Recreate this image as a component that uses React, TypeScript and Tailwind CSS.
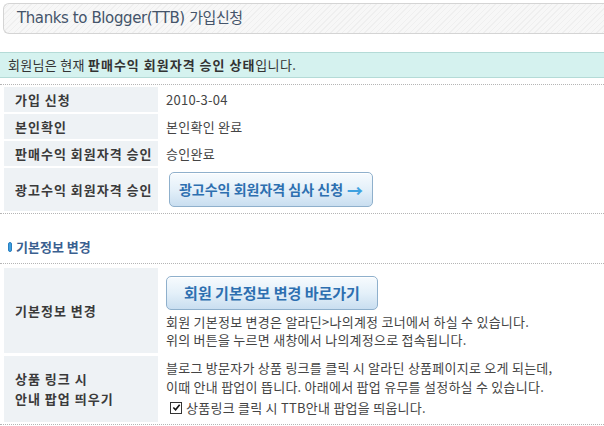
const font = "font-['Noto_Sans_CJK_KR',sans-serif]";

function Dotted() {
  return <div className="h-px w-full border-b border-dotted border-[#b5b5b5]" />;
}

function Label({ children, className = "" }: { children: React.ReactNode; className?: string }) {
  return (
    <div
      className={`bg-[#eef2f5] pl-[11px] flex items-center text-[13px] font-bold tracking-[1px] text-[#3a3a3a] ${className}`}
    >
      {children}
    </div>
  );
}

function BlueButton({ children, className = "" }: { children: React.ReactNode; className?: string }) {
  return (
    <button
      className={`rounded-[5px] border border-[#8fb0cc] bg-gradient-to-b from-[#f7fbfe] via-[#e4f0f9] to-[#c9def0] text-[#2d6fb0] font-bold shadow-[inset_0_1px_0_#fff] ${className}`}
    >
      {children}
    </button>
  );
}

export default function App() {
  return (
    <div className={`w-[604px] h-[426px] bg-white overflow-hidden ${font}`}>
      {/* Title */}
      <div className="pt-[3px] pl-[3px]">
        <div className="h-[31px] rounded-l-[6px] border border-r-0 border-[#d4d4d4] bg-[repeating-linear-gradient(135deg,#f7f7f7_0px,#f7f7f7_3px,#efefef_3px,#efefef_4px)] flex items-center pl-[13px]">
          <span className="text-[15px] text-[#44546a] font-['DejaVu_Sans','Noto_Sans_CJK_KR',sans-serif] tracking-[-0.4px]">
            Thanks to Blogger(TTB) 가입신청
          </span>
        </div>
      </div>

      {/* Notice */}
      <div className="mt-[18px] h-[26px] border-y border-[#b4dbd7] bg-[#d5f2ef] flex items-center pl-[8px] text-[13px] tracking-[0.3px] text-[#333]">
        회원님은 현재&nbsp;<b className="tracking-[1px]">판매수익 회원자격 승인 상태</b>입니다.
      </div>

      <div className="mt-[6px]">
        <Dotted />
      </div>

      {/* Status table */}
      <div className="grid grid-cols-[154px_1fr] gap-y-[2px] mt-[2px] pl-[4px] text-[13px] tracking-[0.25px] text-[#444]">
        <Label className="h-[25px]">가입 신청</Label>
        <div className="flex items-center pl-[8px]">2010-3-04</div>
        <Label className="h-[25px]">본인확인</Label>
        <div className="flex items-center pl-[8px]">본인확인 완료</div>
        <Label className="h-[25px]">판매수익 회원자격 승인</Label>
        <div className="flex items-center pl-[8px]">승인완료</div>
        <Label className="h-[43px]">광고수익 회원자격 승인</Label>
        <div className="flex items-center pl-[11px]">
          <BlueButton className="w-[204px] h-[35px] flex items-center justify-center gap-[4px] tracking-normal text-[14px]">
            광고수익 회원자격 심사 신청
            <span className="text-[#3ea1e0] text-[16px] font-black">→</span>
          </BlueButton>
        </div>
      </div>

      <div className="mt-[2px]">
        <Dotted />
      </div>

      {/* Section header */}
      <div className="mt-[22px] h-[22px] flex items-center pl-[8px] gap-[4px]">
        <span className="w-[4px] h-[10px] rounded-full bg-[#3d9fe0] border border-[#2a7fc0]" />
        <span className="text-[13px] font-bold text-[#3a6090]">기본정보 변경</span>
      </div>

      <div className="mt-[5px]">
        <Dotted />
      </div>

      {/* Basic info table */}
      <div className="grid grid-cols-[154px_1fr] gap-y-[3px] mt-[4px] pl-[4px] text-[13px] tracking-[0.25px] text-[#444]">
        <Label className="h-[85px]">기본정보 변경</Label>
        <div className="pl-[8px] pt-[8px]">
          <BlueButton className="w-[212px] h-[34px] flex items-center justify-center tracking-normal text-[15px]">
            회원 기본정보 변경 바로가기
          </BlueButton>
          <div className="mt-[3px] leading-[18px]">
            <div>회원 기본정보 변경은 알라딘&gt;나의계정 코너에서 하실 수 있습니다.</div>
            <div>위의 버튼을 누르면 새창에서 나의계정으로 접속됩니다.</div>
          </div>
        </div>
        <Label className="h-[66px] leading-[20px]">
          <div>
            상품 링크 시
            <br />
            안내 팝업 띄우기
          </div>
        </Label>
        <div className="pl-[8px] pt-[2px] leading-[19px]">
          <div>블로그 방문자가 상품 링크를 클릭 시 알라딘 상품페이지로 오게 되는데,</div>
          <div>이때 안내 팝업이 뜹니다. 아래에서 팝업 유무를 설정하실 수 있습니다.</div>
          <label className="mt-[2px] ml-[4px] flex items-center gap-[4px]">
            <span className="w-[12px] h-[12px] border border-[#333] bg-white flex items-center justify-center">
              <svg viewBox="0 0 10 10" className="w-[9px] h-[9px]">
                <path d="M1.5 5 L4 7.5 L8.5 2" fill="none" stroke="#111" strokeWidth="1.8" />
              </svg>
            </span>
            상품링크 클릭 시 TTB안내 팝업을 띄웁니다.
          </label>
        </div>
      </div>

      <div className="mt-[2px]">
        <Dotted />
      </div>
    </div>
  );
}
